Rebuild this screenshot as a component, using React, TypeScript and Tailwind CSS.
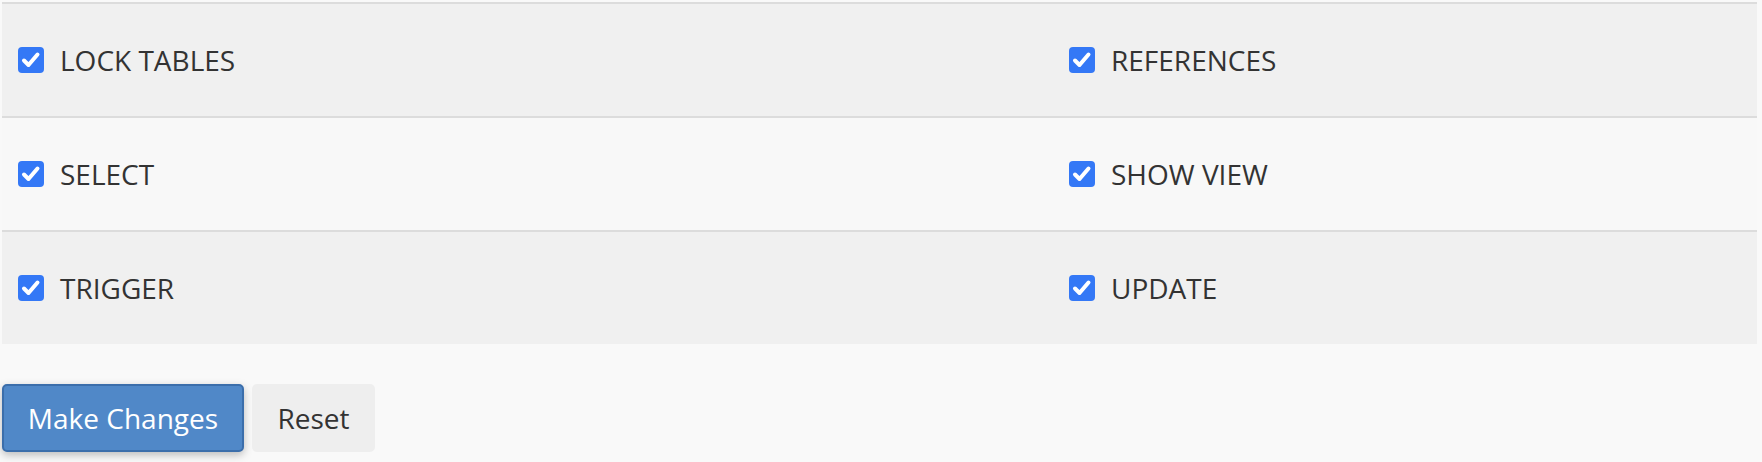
const ROWS: [string, string][] = [
  ['LOCK TABLES', 'REFERENCES'],
  ['SELECT', 'SHOW VIEW'],
  ['TRIGGER', 'UPDATE'],
];

function CheckBox() {
  return (
    <span className="flex h-[26px] w-[26px] shrink-0 items-center justify-center rounded-[4px] bg-[#3478f6]">
      <svg viewBox="0 0 26 26" className="h-[26px] w-[26px]">
        <path
          d="M6 13.5 L10.5 18 L19.5 7.5"
          fill="none"
          stroke="#fff"
          strokeWidth="4"
          strokeLinecap="round"
          strokeLinejoin="round"
        />
      </svg>
    </span>
  );
}

function PrivCell({ label }: { label: string }) {
  return (
    <label className="flex items-center gap-4 px-4">
      <CheckBox />
      <span className="text-[28px] leading-none text-[#333]">{label}</span>
    </label>
  );
}

export default function App() {
  return (
    <div
      className="min-h-[462px] w-[1762px] bg-[#f9f9f9] pl-[2px] pt-[2px]"
      style={{ fontFamily: '"Open Sans", "Noto Sans", sans-serif' }}
    >
      <div className="w-[1755px]">
        {ROWS.map(([left, right], i) => (
          <div
            key={left}
            className={`grid h-[114px] grid-cols-[1051px_1fr] items-center border-t-2 border-[#dcdcdc] ${
              i % 2 === 0 ? 'bg-[#f0f0f0]' : 'bg-[#f8f8f8]'
            }`}
          >
            <PrivCell label={left} />
            <PrivCell label={right} />
          </div>
        ))}
      </div>

      <div className="mt-[40px] flex items-center gap-[8px]">
        <button
          type="button"
          className="h-[68px] w-[242px] rounded-[5px] border-2 border-[#3b6eab] bg-[#5088c8] text-[28px] text-white shadow-[0_3px_8px_rgba(0,0,0,0.25)]"
        >
          Make Changes
        </button>
        <button
          type="button"
          className="h-[68px] w-[123px] rounded-[5px] bg-[#eeeeee] text-[28px] text-[#333]"
        >
          Reset
        </button>
      </div>
    </div>
  );
}
